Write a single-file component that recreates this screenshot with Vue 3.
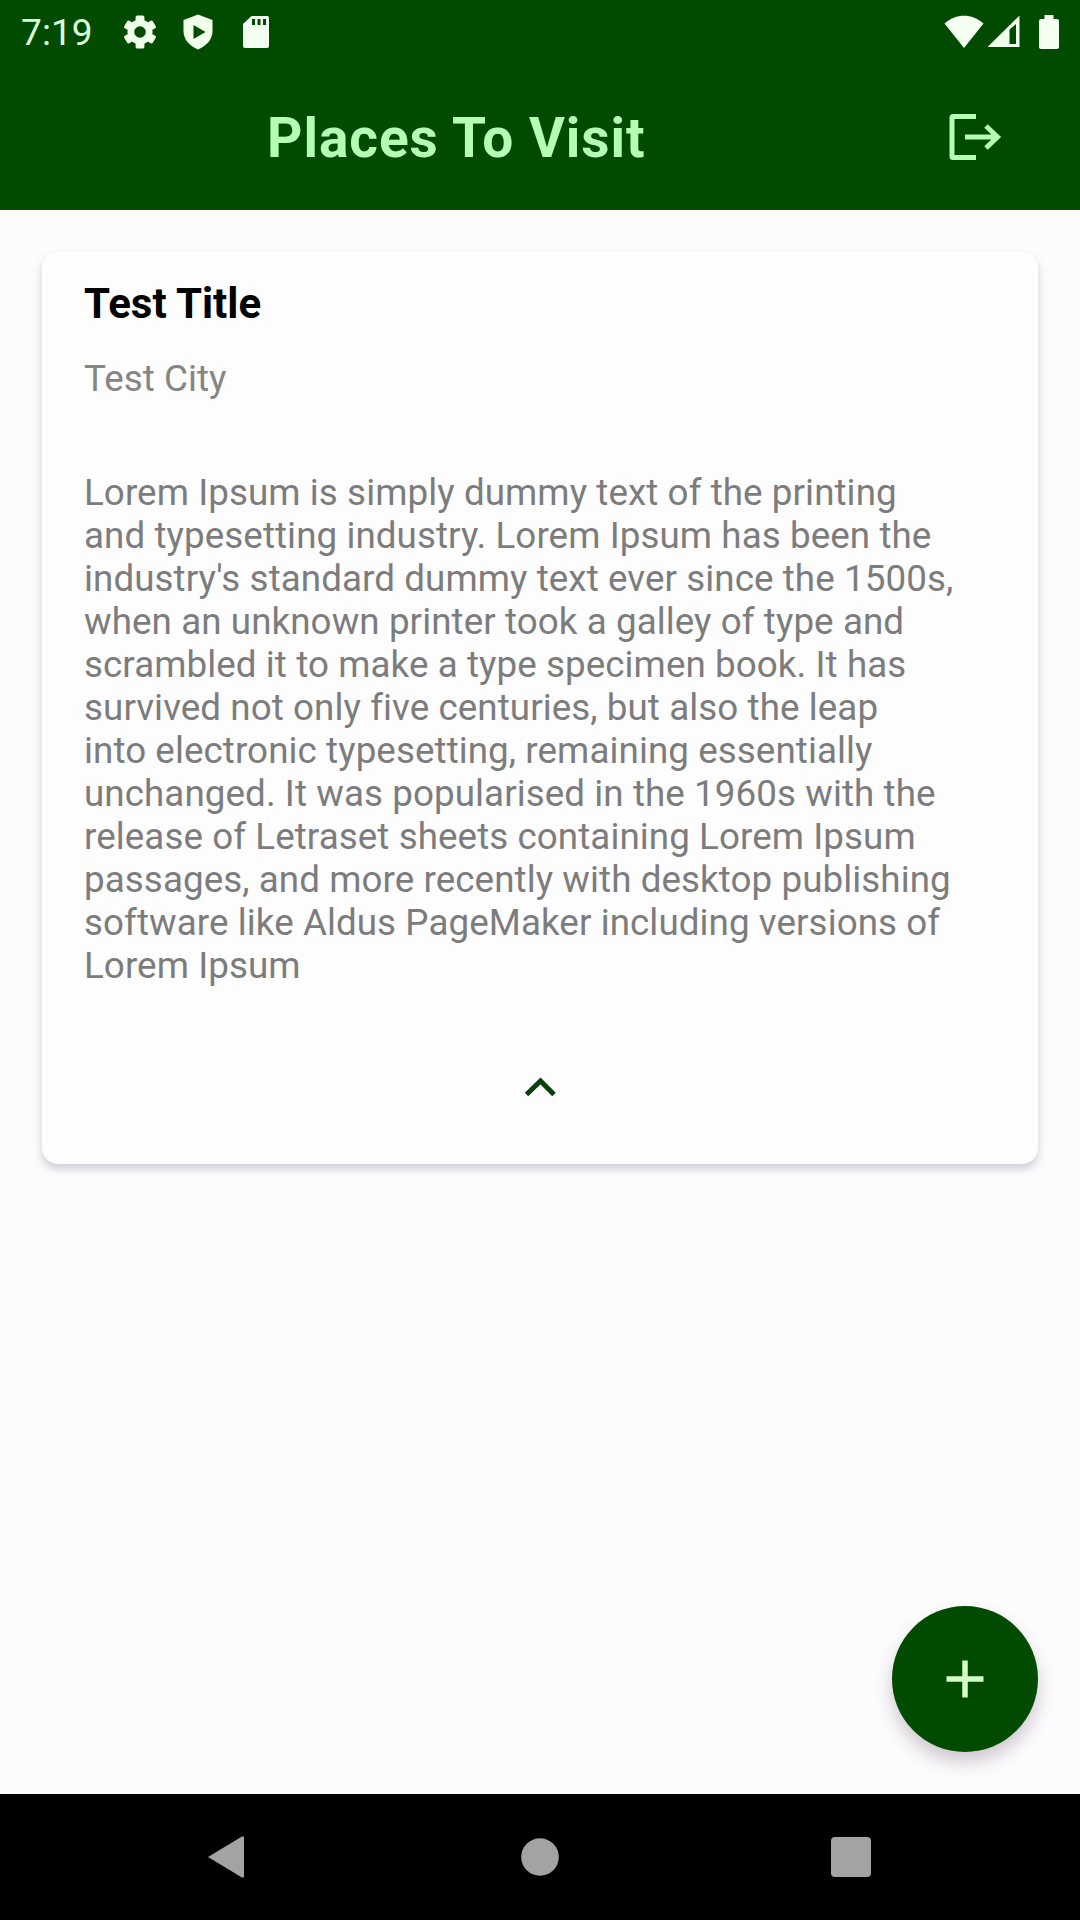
<script setup>
const lines = [
  'Lorem Ipsum is simply dummy text of the printing',
  'and typesetting industry. Lorem Ipsum has been the',
  "industry's standard dummy text ever since the 1500s,",
  'when an unknown printer took a galley of type and',
  'scrambled it to make a type specimen book. It has',
  'survived not only five centuries, but also the leap',
  'into electronic typesetting, remaining essentially',
  'unchanged. It was popularised in the 1960s with the',
  'release of Letraset sheets containing Lorem Ipsum',
  'passages, and more recently with desktop publishing',
  'software like Aldus PageMaker including versions of',
  'Lorem Ipsum',
]
</script>

<template>
  <div class="screen">
    <header class="top">
      <div class="status">
        <span class="clock">7:19</span>
        <svg class="gear" width="34" height="36" viewBox="0 0 34 36">
          <g fill="#efffe9">
            <circle cx="17" cy="18" r="12.5" />
            <rect v-for="a in [0, 60, 120]" :key="a" x="12.6" y="1.5" width="8.8" height="33" rx="1.5" :transform="`rotate(${a} 17 18)`" />
          </g>
          <circle cx="17" cy="18" r="5.8" fill="#004b00" />
        </svg>
        <svg class="shield" width="32" height="36" viewBox="0 0 32 36">
          <path d="M16 .5 30.5 6v11c0 8.500-6 15-14.500 18.500C7.500 32 1.500 25.500 1.500 17V6z" fill="#efffe9" />
          <path d="M11.500 11v14L23.500 18z" fill="#004b00" />
        </svg>
        <svg class="sd" width="28" height="34" viewBox="0 0 28 34">
          <path d="M9.500 1H25a2 2 0 0 1 2 2v28a2 2 0 0 1-2 2H3a2 2 0 0 1-2-2V9z" fill="#f3fff0" />
          <path d="M10 4h3v6h-3zM15.500 4h3v6h-3zM21 4h3v6h-3z" fill="#004b00" />
        </svg>
        <span class="spacer"></span>
        <svg class="wifi" width="40" height="34" viewBox="0 0 40 34">
          <path d="M.5 8.500C12-2 28-2 39.500 8.500L20 33z" fill="#f5fff2" />
        </svg>
        <svg class="signal" width="33" height="33" viewBox="0 0 33 33">
          <path fill-rule="evenodd" d="M32.500.5v31.500H.5zM29 9l-6.500 5.500V29H29z" fill="#efffe9" />
        </svg>
        <svg class="battery" width="22" height="36" viewBox="0 0 22 36">
          <path d="M6.500 1h9v4H19a2 2 0 0 1 2 2v26a2 2 0 0 1-2 2H3a2 2 0 0 1-2-2V7a2 2 0 0 1 2-2h3.500z" fill="#f5fff2" />
        </svg>
      </div>
      <div class="bar">
        <h1>Places To Visit</h1>
        <svg class="logout" width="54" height="50" viewBox="0 0 54 50" fill="none" stroke="#b4ffb4" stroke-width="5">
          <path d="M28 4.500H5a1 1 0 0 0-1 1V44.500a1 1 0 0 0 1 1H28M17 25H50M38 14 49.500 25 38 36" />
        </svg>
      </div>
    </header>

    <main>
      <article class="card">
        <h2>Test Title</h2>
        <p class="city">Test City</p>
        <div class="body"><div v-for="l in lines" :key="l">{{ l }}</div></div>
        <svg class="chevron" width="34" height="22" viewBox="0 0 34 22" fill="none" stroke="#0a400a" stroke-width="5">
          <path d="M3.500 18.500 17.500 5 31 18.500" />
        </svg>
      </article>
      <button class="fab">
        <svg width="40" height="40" viewBox="0 0 40 40" stroke="#d2ffc8" stroke-width="5.500"><path d="M20 1.500V38.500M1.500 20H38.500" /></svg>
      </button>
    </main>

    <nav>
      <svg width="36" height="42" viewBox="0 0 36 42"><path d="M0 21 33.500.8Q36-.5 36 2V40q0 2.500-2.500 1.200z" fill="#a3a3a3" /></svg>
      <svg class="home" width="38" height="38" viewBox="0 0 38 38"><circle cx="19" cy="19" r="18.800" fill="#a3a3a3" /></svg>
      <svg width="40" height="40" viewBox="0 0 40 40"><rect width="40" height="40" rx="4" fill="#a3a3a3" /></svg>
    </nav>
  </div>
</template>

<style>
body {
  margin: 0;
}
</style>

<style scoped>
.screen {
  width: 1080px;
  height: 1920px;
  display: flex;
  flex-direction: column;
  overflow: hidden;
  background: #fcfcfd;
  font-family: Roboto, "Liberation Sans", sans-serif;
}
svg {
  display: block;
  flex: none;
}
.top {
  height: 210px;
  flex: none;
  background: #004b00;
}
.status {
  height: 63px;
  display: flex;
  align-items: center;
  box-sizing: border-box;
  padding: 0 20px 0 21px;
}
.clock {
  width: 102px;
  font-size: 37px;
  letter-spacing: 0.1px;
  color: #dcffd8;
  line-height: 63px;
  padding-top: 2px;
}
.shield {
  margin-left: 25px;
}
.sd {
  margin-left: 28px;
}
.spacer {
  flex: 1;
}
.wifi {
  margin-right: 3px;
}
.battery {
  margin-left: 18px;
}
.bar {
  height: 147px;
  display: flex;
  align-items: center;
  justify-content: space-between;
  box-sizing: border-box;
  padding: 0 78px 0 267px;
}
h1 {
  margin: 0;
  padding-top: 3px;
  font-size: 55px;
  line-height: 62px;
  font-weight: 700;
  letter-spacing: 0.950px;
  color: #b4ffb4;
  white-space: nowrap;
}
main {
  flex: 1;
  display: flex;
  flex-direction: column;
  justify-content: space-between;
  padding: 42px;
}
.card {
  height: 912px;
  box-sizing: border-box;
  padding: 27px 42px 0;
  border-radius: 16px;
  background: #fdfdfe;
  box-shadow: 0 5px 8px rgba(60, 60, 90, 0.24);
  display: flex;
  flex-direction: column;
}
h2 {
  margin: 0;
  font-size: 42px;
  line-height: 50px;
  font-weight: 700;
  color: #000;
}
.city {
  margin: 28px 0 0;
  font-size: 36.750px;
  line-height: 43px;
  letter-spacing: 0.060px;
  color: #858585;
}
.body {
  margin-top: 71px;
  font-size: 36.750px;
  line-height: 43px;
  letter-spacing: 0.080px;
  color: #7c7c7c;
  white-space: nowrap;
}
.chevron {
  align-self: center;
  margin-top: 89px;
}
.fab {
  align-self: flex-end;
  width: 146px;
  height: 146px;
  border: 0;
  padding: 0;
  border-radius: 50%;
  background: #004b00;
  box-shadow: 0 10px 18px rgba(60, 30, 60, 0.24);
  display: flex;
  align-items: center;
  justify-content: center;
}
nav {
  height: 126px;
  flex: none;
  background: #000;
  display: flex;
  align-items: center;
  justify-content: space-between;
  box-sizing: border-box;
  padding: 0 209px 0 208px;
}
.home {
  margin-left: 4px;
}
</style>
